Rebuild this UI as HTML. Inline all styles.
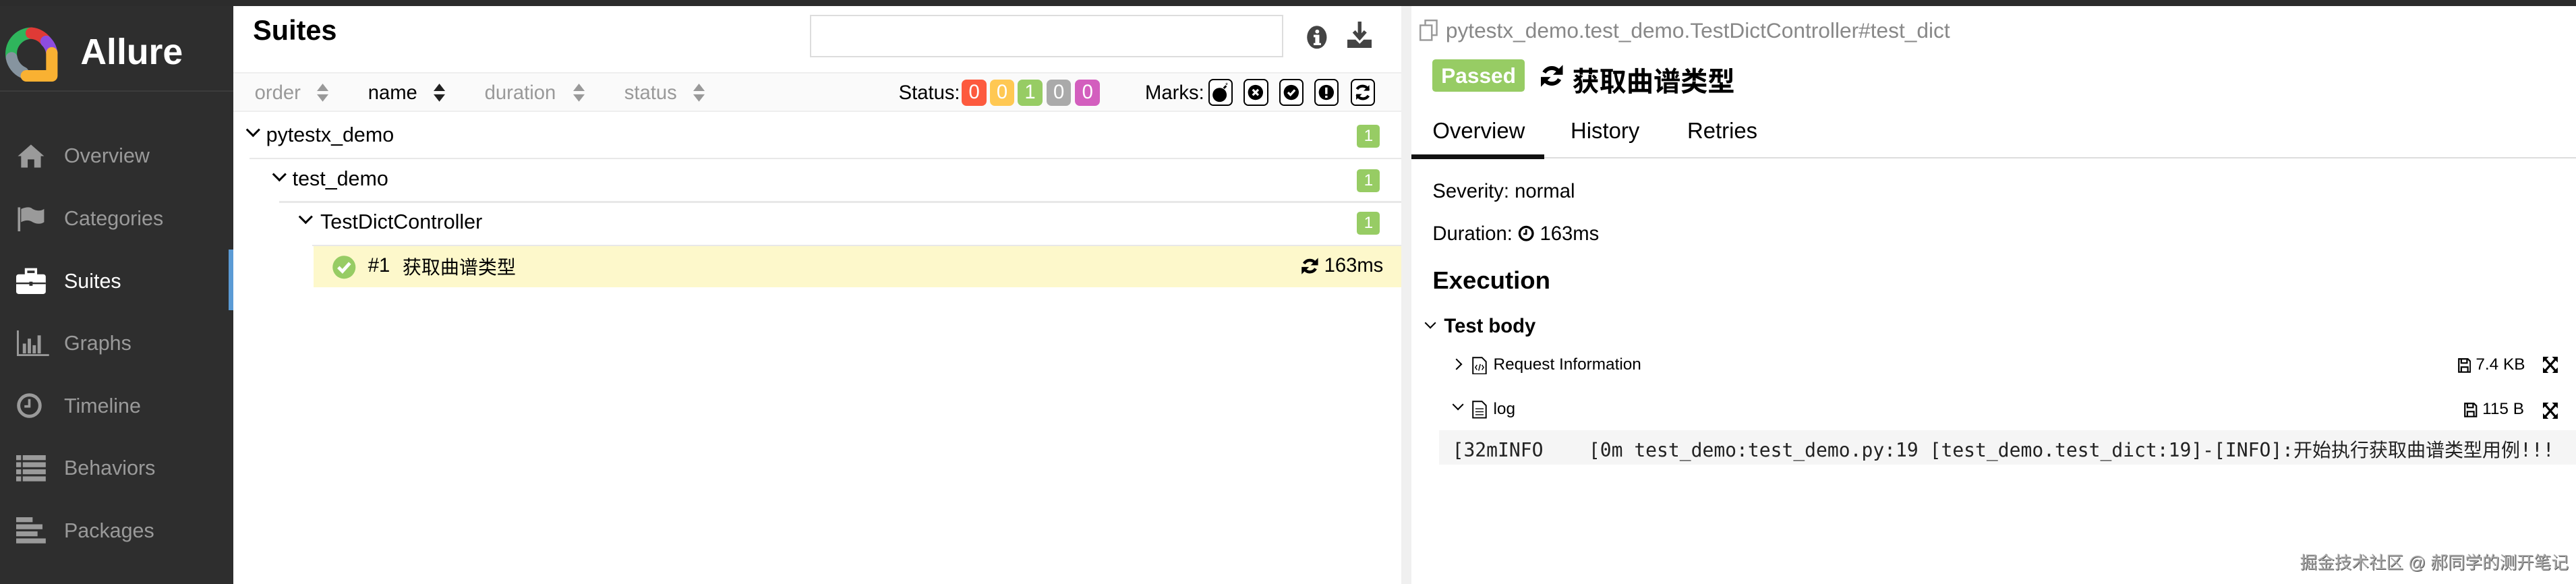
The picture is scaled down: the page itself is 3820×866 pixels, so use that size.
<!DOCTYPE html>
<html><head><meta charset="utf-8">
<style>
*{box-sizing:border-box;margin:0;padding:0}
html,body{width:3820px;height:866px;overflow:hidden;background:#fff}
#w{zoom:2.4362;width:1568px;height:356px;position:relative;font-family:"Liberation Sans","Noto Sans CJK SC",sans-serif;color:#000;overflow:hidden}
.a{position:absolute;white-space:nowrap}
.nav{position:absolute;left:39px;font-size:12.5px;color:#9a9a9a;line-height:14px}
.ic{position:absolute;left:10px}
.b{position:absolute;top:48.5px;width:15px;height:16px;border-radius:3px;color:#fff;font-size:12px;text-align:center;line-height:16px}
.m{position:absolute;top:48px;width:15px;height:16.5px;border:1px solid #000;border-radius:3px;background:#fff}
.m svg{margin:0.5px 0 0 0}
.cnt{position:absolute;left:826px;width:14px;height:14px;background:#97cc64;color:#fff;font-size:10px;border-radius:2px;text-align:center;line-height:14px}
.sep{position:absolute;height:1px;background:#e8e8e8;right:0}
.chev{position:absolute;width:6px;height:6px;border-right:1.3px solid #000;border-bottom:1.3px solid #000;transform:rotate(45deg)}
</style></head><body><div id="w">
<div class="a" style="left:0;top:0;width:1568px;height:3.5px;background:#2c2c2c"></div>
<div class="a" style="left:0;top:3.5px;width:142px;height:353px;background:#2e2e2e"></div>
<div class="a" style="left:0;top:55px;width:142px;height:1px;background:#3c3c3c"></div>
<svg class="a" style="left:2px;top:15px" width="34" height="36" viewBox="0 0 34 36">
<g fill="none" stroke-width="7" stroke-linecap="round">
<path d="M17 5 A12.5 12.5 0 0 0 5 20" stroke="#2fb55c"/>
<path d="M5 20 A12.5 12.5 0 0 0 12 29" stroke="#86949f"/>
<path d="M17 5 A12.5 12.5 0 0 1 26 10" stroke="#df3a36"/>
<path d="M26 10 A12.5 12.5 0 0 1 29.5 17" stroke="#8d4ce0"/>
<path d="M29.5 17 L29.5 31 M14 31 L29 31" stroke="#f9b132"/>
</g></svg>
<div class="a" style="left:49px;top:19px;font-size:22px;font-weight:bold;color:#fff">Allure</div>
<svg class="ic" style="top:87px" width="18" height="16" viewBox="0 0 18 16"><path d="M9 1 L1 8 L3 8 L3 15 L7 15 L7 10 L11 10 L11 15 L15 15 L15 8 L17 8 Z" fill="#9a9a9a"/></svg>
<div class="nav" style="top:88px">Overview</div>
<svg class="ic" style="top:125px" width="18" height="16" viewBox="0 0 18 16"><rect x="1" y="1" width="1.5" height="15" fill="#9a9a9a"/><path d="M3 2 Q8 0 10 2 Q14 4 17 2 L17 10 Q14 12 10 10 Q7 8 3 10Z" fill="#9a9a9a"/></svg>
<div class="nav" style="top:126px">Categories</div>
<svg class="ic" style="top:163px" width="18" height="16" viewBox="0 0 18 16"><rect x="0" y="4" width="18" height="12" rx="1.5" fill="#fff"/><rect x="6" y="1" width="6" height="3" fill="none" stroke="#fff" stroke-width="1.5"/><rect x="0" y="9" width="18" height="1" fill="#2e2e2e"/><rect x="8" y="8.5" width="2" height="2.5" fill="#2e2e2e"/></svg>
<div class="nav" style="top:164px;color:#fff">Suites</div>
<div class="a" style="left:139px;top:152px;width:3px;height:37px;background:#5b9bd5"></div>
<svg class="ic" style="top:201px" width="20" height="16" viewBox="0 0 20 16"><path d="M1 0 V15 H20" stroke="#9a9a9a" stroke-width="1.2" fill="none"/><rect x="4" y="8" width="2" height="6" fill="#9a9a9a"/><rect x="7" y="5" width="2" height="9" fill="#9a9a9a"/><rect x="10" y="9" width="2" height="5" fill="#9a9a9a"/><rect x="13" y="3" width="2" height="11" fill="#9a9a9a"/></svg>
<div class="nav" style="top:202px">Graphs</div>
<svg class="ic" style="top:239px" width="16" height="16" viewBox="0 0 16 16"><circle cx="8" cy="8" r="6.5" stroke="#9a9a9a" stroke-width="2" fill="none"/><path d="M8 4 V8.5 H5" stroke="#9a9a9a" stroke-width="1.5" fill="none"/></svg>
<div class="nav" style="top:240px">Timeline</div>
<svg class="ic" style="top:277px" width="18" height="16" viewBox="0 0 18 16"><g fill="#9a9a9a"><rect x="0" y="0" width="3" height="3"/><rect x="4" y="0" width="14" height="3"/><rect x="0" y="4.3" width="3" height="3"/><rect x="4" y="4.3" width="14" height="3"/><rect x="0" y="8.6" width="3" height="3"/><rect x="4" y="8.6" width="14" height="3"/><rect x="0" y="12.9" width="3" height="3"/><rect x="4" y="12.9" width="14" height="3"/></g></svg>
<div class="nav" style="top:278px">Behaviors</div>
<svg class="ic" style="top:315px" width="18" height="16" viewBox="0 0 18 16"><g fill="#9a9a9a"><rect x="0" y="0" width="10" height="3"/><rect x="0" y="4.3" width="16" height="3"/><rect x="0" y="8.6" width="13" height="3"/><rect x="0" y="12.9" width="18" height="3"/></g></svg>
<div class="nav" style="top:316px">Packages</div>

<div class="a" style="left:154px;top:9px;font-size:17px;font-weight:bold">Suites</div>
<div class="a" style="left:493px;top:9px;width:288px;height:26px;border:1px solid #ddd"></div>
<svg class="a" style="left:795px;top:15px" width="13" height="15" viewBox="0 0 13 15"><ellipse cx="6.5" cy="7.5" rx="6" ry="7" fill="#444"/><rect x="5.5" y="6" width="2.5" height="6" fill="#fff"/><rect x="4.5" y="6" width="2" height="1.5" fill="#fff"/><rect x="4.5" y="11" width="4.5" height="1.3" fill="#fff"/><circle cx="6.7" cy="4" r="1.2" fill="#fff"/></svg>
<svg class="a" style="left:820px;top:13px" width="15" height="17" viewBox="0 0 15 17"><path d="M7.5 0 V9 M4 6 L7.5 10 L11 6" stroke="#444" stroke-width="2.2" fill="none"/><path d="M0 11 H5 L7.5 13.5 L10 11 H15 V16 H0Z" fill="#444"/></svg>
<div class="a" style="left:142px;top:44px;width:711px;height:24px;background:#fafafa;border-top:1px solid #eee;border-bottom:1px solid #eee"></div>
<div class="a" style="left:155px;top:50px;font-size:12px;color:#999">order</div>
<div class="a" style="left:224px;top:50px;font-size:12px;color:#000">name</div>
<div class="a" style="left:295px;top:50px;font-size:12px;color:#999">duration</div>
<div class="a" style="left:380px;top:50px;font-size:12px;color:#999">status</div>
<svg class="a" style="left:193px;top:51px" width="7" height="11" viewBox="0 0 7 11"><path d="M0 4.5 L3.5 0 L7 4.5Z M0 6.5 L3.5 11 L7 6.5Z" fill="#999"/></svg>
<svg class="a" style="left:264px;top:51px" width="7" height="11" viewBox="0 0 7 11"><path d="M0 4.5 L3.5 0 L7 4.5Z M0 6.5 L3.5 11 L7 6.5Z" fill="#222"/></svg>
<svg class="a" style="left:349px;top:51px" width="7" height="11" viewBox="0 0 7 11"><path d="M0 4.5 L3.5 0 L7 4.5Z M0 6.5 L3.5 11 L7 6.5Z" fill="#999"/></svg>
<svg class="a" style="left:422px;top:51px" width="7" height="11" viewBox="0 0 7 11"><path d="M0 4.5 L3.5 0 L7 4.5Z M0 6.5 L3.5 11 L7 6.5Z" fill="#999"/></svg>
<div class="a" style="left:547px;top:50px;font-size:12px">Status:</div>
<div class="b" style="left:585.5px;background:#fd5a3e">0</div>
<div class="b" style="left:602.5px;background:#ffc853">0</div>
<div class="b" style="left:619.5px;background:#97cc64">1</div>
<div class="b" style="left:637px;background:#aaa">0</div>
<div class="b" style="left:654.5px;background:#d35ebe">0</div>
<div class="a" style="left:697px;top:50px;font-size:12px">Marks:</div>
<div class="m" style="left:735.5px"><svg width="13" height="14" viewBox="0 0 13 14" style="display:block"><circle cx="6" cy="8.5" r="4.3" fill="#000"/><path d="M8.5 4.5 L10 3" stroke="#000" stroke-width="1.2"/><text x="9.5" y="4" font-size="4">*</text></svg></div>
<div class="m" style="left:757px"><svg width="13" height="14" viewBox="0 0 13 14" style="display:block"><circle cx="6.5" cy="7" r="4.6" fill="#000"/><path d="M4.8 5.3 L8.2 8.7 M8.2 5.3 L4.8 8.7" stroke="#fff" stroke-width="1.3"/></svg></div>
<div class="m" style="left:778.5px"><svg width="13" height="14" viewBox="0 0 13 14" style="display:block"><circle cx="6.5" cy="7" r="4.6" fill="#000"/><path d="M4.5 7 L6 8.5 L8.7 5.5" stroke="#fff" stroke-width="1.3" fill="none"/></svg></div>
<div class="m" style="left:800px"><svg width="13" height="14" viewBox="0 0 13 14" style="display:block"><circle cx="6.5" cy="7" r="4.6" fill="#000"/><rect x="5.8" y="4" width="1.4" height="4" fill="#fff"/><rect x="5.8" y="9" width="1.4" height="1.3" fill="#fff"/></svg></div>
<div class="m" style="left:822px"><svg width="13" height="14" viewBox="0 0 13 14" style="display:block"><path d="M10 5.5 A4 4 0 0 0 3 5 M3 8.5 A4 4 0 0 0 10 9" stroke="#000" stroke-width="1.7" fill="none"/><path d="M10.5 2.5 V6 H7Z M2.5 11.5 V8 H6Z" fill="#000"/></svg></div>

<div class="chev" style="left:151px;top:76px"></div>
<div class="a" style="left:162px;top:75px;font-size:12.5px">pytestx_demo</div>
<div class="cnt" style="top:76px">1</div>
<div class="sep" style="left:152px;top:96px;width:701px"></div>
<div class="chev" style="left:167px;top:103px"></div>
<div class="a" style="left:178px;top:102px;font-size:12.5px">test_demo</div>
<div class="cnt" style="top:103px">1</div>
<div class="sep" style="left:170px;top:122.5px;width:683px"></div>
<div class="chev" style="left:183px;top:129px"></div>
<div class="a" style="left:195px;top:128px;font-size:12.5px">TestDictController</div>
<div class="cnt" style="top:129px">1</div>
<div class="sep" style="left:190px;top:149px;width:663px"></div>
<div class="a" style="left:191px;top:150px;width:662px;height:25px;background:#fdf8cb"></div>
<svg class="a" style="left:202px;top:155px" width="15" height="15" viewBox="0 0 15 15"><circle cx="7.5" cy="7.5" r="7" fill="#97cc64"/><path d="M4 7.5 L6.5 10 L11 5" stroke="#fff" stroke-width="2" fill="none"/></svg>
<div class="a" style="left:224px;top:155px;font-size:12px">#1</div>
<div class="a" style="left:245px;top:154px;font-size:11.5px">获取曲谱类型</div>
<svg class="a" style="left:792px;top:156px" width="11" height="12" viewBox="0 0 11 12"><path d="M9 4.5 A4 4 0 0 0 2 4.5 M2 7.5 A4 4 0 0 0 9 7.5" stroke="#000" stroke-width="1.8" fill="none"/><path d="M10.5 1 V5.5 H6Z M0.5 11 V6.5 H5Z" fill="#000"/></svg>
<div class="a" style="left:806px;top:155px;font-size:12px">163ms</div>

<div class="a" style="left:853px;top:3.5px;width:6px;height:353px;background:#f0f0f0"></div>

<svg class="a" style="left:864px;top:12px" width="12" height="13" viewBox="0 0 12 13"><rect x="3.5" y="0.5" width="7" height="9" fill="none" stroke="#999"/><rect x="0.5" y="3.5" width="7" height="9" fill="#fff" stroke="#999"/></svg>
<div class="a" style="left:880px;top:11px;font-size:13px;color:#888">pytestx_demo.test_demo.TestDictController#test_dict</div>
<div class="a" style="left:872px;top:36px;width:56px;height:20px;background:#97cc64;border-radius:2px;color:#fff;font-weight:bold;font-size:13px;text-align:center;line-height:20px">Passed</div>
<svg class="a" style="left:937px;top:38px" width="15" height="16" viewBox="0 0 11 12"><path d="M9 4.5 A4 4 0 0 0 2 4.5 M2 7.5 A4 4 0 0 0 9 7.5" stroke="#000" stroke-width="1.8" fill="none"/><path d="M10.5 1 V5.5 H6Z M0.5 11 V6.5 H5Z" fill="#000"/></svg>
<div class="a" style="left:957px;top:36px;font-size:16.5px;font-weight:bold">获取曲谱类型</div>
<div class="a" style="left:872px;top:72px;font-size:13.5px">Overview</div>
<div class="a" style="left:956px;top:72px;font-size:13.5px">History</div>
<div class="a" style="left:1027px;top:72px;font-size:13.5px">Retries</div>
<div class="a" style="left:859px;top:95.5px;width:709px;height:1px;background:#ddd"></div>
<div class="a" style="left:859px;top:94px;width:81px;height:3px;background:#111"></div>
<div class="a" style="left:872px;top:110px;font-size:12px">Severity: normal</div>
<div class="a" style="left:872px;top:136px;font-size:12px">Duration: <svg width="10" height="10" viewBox="0 0 10 10" style="vertical-align:-1px"><circle cx="5" cy="5" r="4" stroke="#000" stroke-width="1.4" fill="none"/><path d="M5 2.5 V5.3 H3.3" stroke="#000" stroke-width="1.1" fill="none"/></svg> 163ms</div>
<div class="a" style="left:872px;top:162px;font-size:15px;font-weight:bold">Execution</div>
<div class="chev" style="left:868px;top:194px;width:5px;height:5px;border-width:1.2px"></div>
<div class="a" style="left:879px;top:192px;font-size:12px;font-weight:bold">Test body</div>
<div class="chev" style="left:884px;top:219px;width:5px;height:5px;border-width:1px;transform:rotate(-45deg)"></div>
<svg class="a" style="left:896px;top:217px" width="9" height="11" viewBox="0 0 9 11"><path d="M0.5 0.5 H6 L8.5 3 V10.5 H0.5Z" fill="none" stroke="#000" stroke-width="0.8"/><path d="M3 5 L2 6.5 L3 8 M6 5 L7 6.5 L6 8 M5 4.5 L4 8.5" stroke="#000" stroke-width="0.6" fill="none"/></svg>
<div class="a" style="left:909px;top:216.5px;font-size:10px">Request Information</div>
<svg class="a" style="left:1496px;top:218px" width="8" height="9" viewBox="0 0 8 9"><path d="M0.5 0.5 H6 L7.5 2 V8.5 H0.5Z M2 0.5 V3 H5.5 V0.5 M2 8.5 V5.5 H6 V8.5" fill="none" stroke="#000" stroke-width="0.9"/></svg>
<div class="a" style="left:1507px;top:216.5px;font-size:10px">7.4 KB</div>
<svg class="a" style="left:1548px;top:217px" width="9" height="10" viewBox="0 0 9 10"><path d="M1 1 L8 9 M8 1 L1 9" stroke="#000" stroke-width="1.3"/><path d="M0 0 H3.5 L0 3.5Z M9 0 H5.5 L9 3.5Z M0 10 H3.5 L0 6.5Z M9 10 H5.5 L9 6.5Z" fill="#000"/></svg>
<div class="chev" style="left:885px;top:244px;width:5px;height:5px;border-width:1px"></div>
<svg class="a" style="left:896px;top:244px" width="9" height="11" viewBox="0 0 9 11"><path d="M0.5 0.5 H6 L8.5 3 V10.5 H0.5Z" fill="none" stroke="#000" stroke-width="0.8"/><path d="M2 5 H7 M2 6.8 H7 M2 8.6 H7" stroke="#000" stroke-width="0.6"/></svg>
<div class="a" style="left:909px;top:243.5px;font-size:10px">log</div>
<svg class="a" style="left:1500px;top:245px" width="8" height="9" viewBox="0 0 8 9"><path d="M0.5 0.5 H6 L7.5 2 V8.5 H0.5Z M2 0.5 V3 H5.5 V0.5 M2 8.5 V5.5 H6 V8.5" fill="none" stroke="#000" stroke-width="0.9"/></svg>
<div class="a" style="left:1511px;top:243.5px;font-size:10px">115 B</div>
<svg class="a" style="left:1548px;top:245px" width="9" height="10" viewBox="0 0 9 10"><path d="M1 1 L8 9 M8 1 L1 9" stroke="#000" stroke-width="1.3"/><path d="M0 0 H3.5 L0 3.5Z M9 0 H5.5 L9 3.5Z M0 10 H3.5 L0 6.5Z M9 10 H5.5 L9 6.5Z" fill="#000"/></svg>
<div class="a" style="left:876px;top:262px;width:692px;height:21px;background:#f5f5f5"></div>
<div class="a" style="left:884px;top:265px;font-size:11.5px;font-family:'DejaVu Sans Mono','Noto Sans CJK SC',monospace;color:#222">[32mINFO&nbsp;&nbsp;&nbsp;&nbsp;[0m test_demo:test_demo.py:19 [test_demo.test_dict:19]-[INFO]:开始执行获取曲谱类型用例!!!</div>
<div class="a" style="left:1400px;top:334px;font-size:10.5px;color:#aaa;text-shadow:0.4px 0.4px 0 #555">掘金技术社区 @ 郝同学的测开笔记</div>
</div></body></html>
